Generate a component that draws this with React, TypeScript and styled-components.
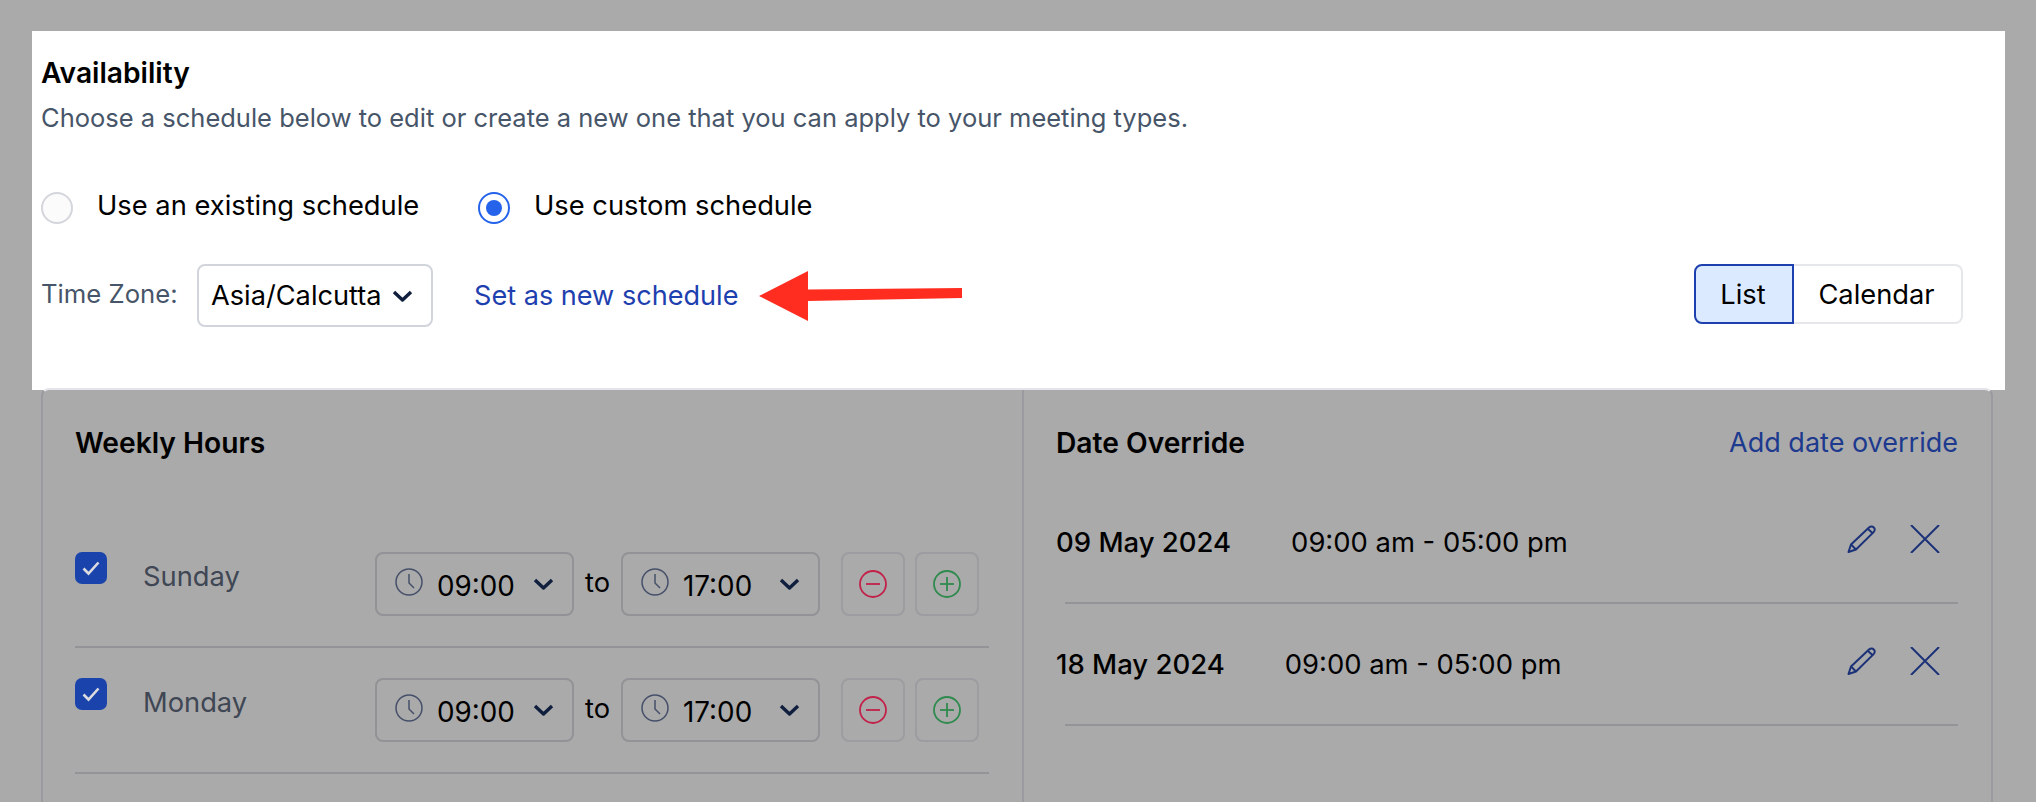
import React from "react";
import styled, { createGlobalStyle } from "styled-components";

const Global = createGlobalStyle`
  html, body { margin: 0; padding: 0; background: #aaaaaa; overflow: hidden; }
  body { font-family: Inter, "Liberation Sans", sans-serif; color: #000; }
  * { box-sizing: border-box; }
`;

const Page = styled.div`
  height: 802px; overflow: hidden; padding: 31px 31px 0 32px; background: #aaaaaa;
`;
const Spotlight = styled.section`
  background: #fff; height: 359px; padding: 26px 42px 0 9px;
  display: flex; flex-direction: column;
`;
const Title = styled.h2`
  margin: 0; font-size: 28.2px; line-height: 32px; font-weight: 600; color: #000;
`;
const Subtitle = styled.p`
  margin: 13px 0 0; font-size: 25.5px; line-height: 32px; color: #475569; white-space: nowrap;
`;
const RadioRow = styled.div`
  margin-top: 58px; display: flex; align-items: center; height: 32px;
`;
const RadioOption = styled.label<{ $width: number }>`
  display: flex; align-items: center; width: ${p => p.$width}px;
  font-size: 27.3px; line-height: 32px; color: #000;
`;
const RadioText = styled.span`
  padding-bottom: 5px; white-space: nowrap;
`;
const RadioMark = styled.span<{ $on?: boolean }>`
  width: 32px; height: 32px; border-radius: 50%; flex: none; margin-right: 24px;
  border: 2px solid ${p => (p.$on ? "#2563eb" : "#d4d6dc")};
  background: ${p => (p.$on ? "#fff" : "#fbfbfc")};
  display: flex; align-items: center; justify-content: center;
  &::after {
    content: ""; width: 16px; height: 16px; border-radius: 50%;
    background: ${p => (p.$on ? "#2563eb" : "transparent")};
  }
`;
const ControlRow = styled.div`
  margin-top: 40px; display: flex; align-items: center; height: 63px;
`;
const ZoneLabel = styled.span`
  font-size: 25.7px; line-height: 32px; color: #475569; width: 156px; margin-top: -4px; white-space: nowrap;
`;
const ZoneSelect = styled.div`
  width: 236px; height: 63px; border: 2px solid #d1d5db; border-radius: 8px; flex: none;
  display: flex; align-items: center; padding: 0 18px 0 12px;
  font-size: 27.2px; color: #000; white-space: nowrap;
  svg { margin-left: auto; }
`;
const SetLink = styled.a`
  margin-left: 41px; font-size: 27.1px; line-height: 32px; color: #1e40af; white-space: nowrap;
`;
const ArrowMark = styled.svg`
  margin-left: 21px; flex: none;
`;
const Toggle = styled.div`
  margin-left: auto; display: flex; height: 60px; align-self: flex-start;
`;
const ToggleButton = styled.div<{ $on?: boolean; $w: number }>`
  width: ${p => p.$w}px; height: 60px; display: flex; align-items: center; justify-content: center;
  font-size: 27.3px; color: #000; padding-right: 2px;
  background: ${p => (p.$on ? "#dbeafe" : "#fff")};
  border: 2px solid ${p => (p.$on ? "#1e40af" : "#e5e7eb")};
  border-left-width: ${p => (p.$on ? 2 : 0)}px;
  border-radius: ${p => (p.$on ? "8px 0 0 8px" : "0 8px 8px 0")};
`;
const Card = styled.section`
  margin: -2px 12px 0 9px; height: 460px; display: grid; grid-template-columns: 981px 1fr;
  border: 2px solid #9a9aa0; border-top-color: #e4e5ea; border-bottom: 0; border-radius: 8px 8px 0 0;
`;
const WeeklyColumn = styled.div`
  padding: 37px 33px 0 32px; border-right: 2px solid #9a9aa0;
`;
const Heading = styled.h3`
  margin: 0; font-size: 28.2px; line-height: 32px; font-weight: 600; color: #000;
`;
const DayList = styled.div`
  margin-top: 93px;
`;
const DayRow = styled.div`
  display: flex; align-items: flex-start; height: 96px; padding-right: 10px;
  border-bottom: 2px solid #949498; margin-bottom: 30px;
`;
const Check = styled.span`
  width: 32px; height: 32px; border-radius: 7px; background: #1a43ab; flex: none; margin-right: 36px;
  display: flex; align-items: center; justify-content: center;
`;
const DayName = styled.span`
  flex: 1; font-size: 27.3px; line-height: 32px; color: #3f4654; margin-top: 9px;
`;
const TimeSelect = styled.div`
  width: 199px; height: 64px; border: 2px solid #929297; border-radius: 8px; flex: none;
  display: flex; align-items: center; padding: 0 18px;
  font-size: 27.8px; color: #000;
  span { margin-left: 14px; padding-top: 3px; }
  svg:first-child { margin-bottom: 4px; }
  svg:last-child { margin-left: auto; }
`;
const ToWord = styled.span`
  width: 47px; text-align: center; font-size: 27.3px; line-height: 62px; color: #000;
`;
const RoundButton = styled.div<{ $first?: boolean }>`
  width: 64px; height: 64px; border: 2px solid #9c9ca1; border-radius: 8px; flex: none;
  display: flex; align-items: center; justify-content: center;
  margin-left: ${p => (p.$first ? 21 : 10)}px;
`;
const OverrideColumn = styled.div`
  padding: 37px 33px 0 32px;
`;
const OverrideHeader = styled.div`
  display: flex; justify-content: space-between; align-items: center; height: 32px; margin-bottom: 23px;
`;
const AddLink = styled.a`
  font-size: 27px; line-height: 32px; color: #1d3a8f; white-space: nowrap;
`;
const OverrideRow = styled.div`
  display: flex; align-items: center; height: 120px; padding-right: 18px;
`;
const OverrideDate = styled.span`
  font-size: 27.5px; line-height: 32px; font-weight: 500; color: #000; margin-right: 60px; white-space: nowrap;
`;
const OverrideTime = styled.span`
  font-size: 27.4px; line-height: 32px; color: #000; white-space: nowrap;
`;
const OverrideActions = styled.div`
  margin-left: auto; display: flex; gap: 33px; margin-top: -6px;
`;
const OverrideRule = styled.div`
  margin-left: 9px; height: 2px; background: #949498;
`;

const Chevron = () => (
  <svg width="21" height="12" viewBox="0 0 21 12" fill="none">
    <path d="M2 2l8.5 8L19 2" stroke="#0f1f3d" strokeWidth="3.4" strokeLinejoin="round" />
  </svg>
);
const ClockIcon = () => (
  <svg width="28" height="28" viewBox="0 0 28 28" fill="none" stroke="#46506a" strokeWidth="1.5">
    <circle cx="14" cy="14" r="13" />
    <path d="M14 6v9l5 5" />
  </svg>
);
const CheckGlyph = () => (
  <svg width="20" height="16" viewBox="0 0 20 16" fill="none">
    <path d="M2.5 8.5l5 5L17.5 2.5" stroke="#dcdce0" strokeWidth="2.6" />
  </svg>
);
const CircleGlyph = ({ color, plus }: { color: string; plus?: boolean }) => (
  <svg width="28" height="28" viewBox="0 0 28 28" fill="none" stroke={color} strokeWidth="1.8">
    <circle cx="14" cy="14" r="13" />
    <path d="M7 14h14" />
    {plus && <path d="M14 7v14" />}
  </svg>
);
const Pencil = () => (
  <svg width="30" height="28" viewBox="0 0 30 28" fill="none" stroke="#1c3278" strokeWidth="2" strokeLinejoin="round">
    <path d="M1.5 27l2.5-7.5L22 2.5c1.6-1.4 3.6-1.4 4.8 0 1.3 1.3 1.2 3.2-.2 4.6L9 24.5z" />
    <path d="M4 19.5l5 5M21 4l5 4.5" />
  </svg>
);
const Cross = () => (
  <svg width="30" height="28" viewBox="0 0 30 28" fill="none" stroke="#1c3278" strokeWidth="2">
    <path d="M1 0l28 28M29 0L1 28" />
  </svg>
);

const TimeField = ({ value }: { value: string }) => (
  <TimeSelect>
    <ClockIcon />
    <span>{value}</span>
    <Chevron />
  </TimeSelect>
);

const Day = ({ name }: { name: string }) => (
  <DayRow>
    <Check><CheckGlyph /></Check>
    <DayName>{name}</DayName>
    <TimeField value="09:00" />
    <ToWord>to</ToWord>
    <TimeField value="17:00" />
    <RoundButton $first><CircleGlyph color="#c2224a" /></RoundButton>
    <RoundButton><CircleGlyph color="#2f8a4e" plus /></RoundButton>
  </DayRow>
);

const Override = ({ date }: { date: string }) => (
  <>
    <OverrideRow>
      <OverrideDate>{date}</OverrideDate>
      <OverrideTime>09:00 am - 05:00 pm</OverrideTime>
      <OverrideActions><Pencil /><Cross /></OverrideActions>
    </OverrideRow>
    <OverrideRule />
  </>
);

export default function App() {
  return (
    <Page>
      <Global />
      <Spotlight>
        <Title>Availability</Title>
        <Subtitle>Choose a schedule below to edit or create a new one that you can apply to your meeting types.</Subtitle>
        <RadioRow>
          <RadioOption $width={437}><RadioMark /><RadioText>Use an existing schedule</RadioText></RadioOption>
          <RadioOption $width={400}><RadioMark $on /><RadioText>Use custom schedule</RadioText></RadioOption>
        </RadioRow>
        <ControlRow>
          <ZoneLabel>Time Zone:</ZoneLabel>
          <ZoneSelect>Asia/Calcutta<Chevron /></ZoneSelect>
          <SetLink>Set as new schedule</SetLink>
          <ArrowMark width="204" height="50" viewBox="0 0 204 50">
            <path d="M0 25L49 0v18.5L203 17v10L49 30v20z" fill="#ff2d20" />
          </ArrowMark>
          <Toggle>
            <ToggleButton $on $w={100}>List</ToggleButton>
            <ToggleButton $w={169}>Calendar</ToggleButton>
          </Toggle>
        </ControlRow>
      </Spotlight>
      <Card>
        <WeeklyColumn>
          <Heading>Weekly Hours</Heading>
          <DayList>
            <Day name="Sunday" />
            <Day name="Monday" />
          </DayList>
        </WeeklyColumn>
        <OverrideColumn>
          <OverrideHeader>
            <Heading>Date Override</Heading>
            <AddLink>Add date override</AddLink>
          </OverrideHeader>
          <Override date="09 May 2024" />
          <Override date="18 May 2024" />
        </OverrideColumn>
      </Card>
    </Page>
  );
}
